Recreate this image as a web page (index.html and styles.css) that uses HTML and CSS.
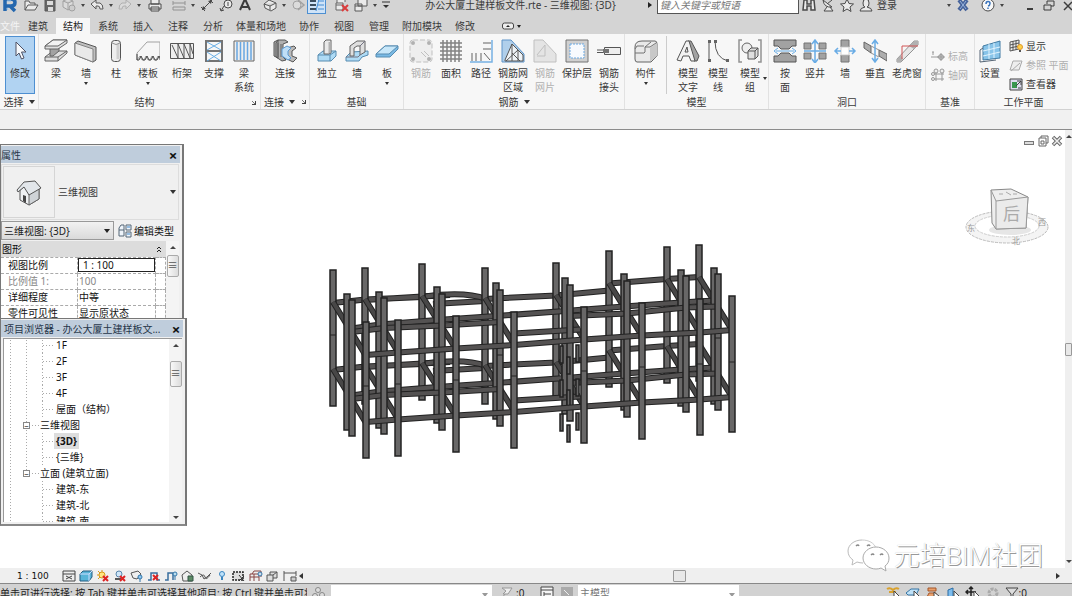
FILE: index.html
```html
<!DOCTYPE html>
<html lang="zh-CN">
<head>
<meta charset="utf-8">
<title>办公大厦土建样板文件.rte - 三维视图: {3D}</title>
<link rel="stylesheet" href="styles.css">
</head>
<body>
<header class="titlebar">
  <div class="titlebar-row">
    <div class="qat">
      <button class="app-logo" aria-label="应用程序菜单"><svg width="16" height="18" viewBox="0 0 16 18"><path d="M3 2v13M3 3h6q4 0 4 3.500t-4 3.500H4M8 10l5 5" fill="none" stroke="#2467ae" stroke-width="3.500"/><path d="M5 5h4M5 12l1 2" stroke="#8fc0ea" fill="none"/></svg></button>
      <button class="q" aria-label="打开"><svg width="16" height="16" viewBox="0 0 16 16"><path d="M2 13V4h4l1 2h5v2M2 13l3-5h10l-3 5z" fill="#eee" stroke="#444"/></svg></button>
      <button class="q" aria-label="保存"><svg width="16" height="16" viewBox="0 0 16 16"><path d="M3 3h10v11H3z" fill="#555" stroke="#444"/><path d="M5 4h6v4H5zM6 10h5v4H6z" fill="#ddd"/></svg></button>
      <button class="q" aria-label="同步"><svg width="16" height="16" viewBox="0 0 16 16"><path d="M2 4l5-2 5 2v6l-5 3-5-3zM2 4l5 2 5-2M7 6v7" fill="#ddd" stroke="#999"/><circle cx="11" cy="11" r="3" fill="#ccc" stroke="#999"/></svg></button>
      <span class="qc"></span>
      <button class="q" aria-label="撤消"><svg width="16" height="16" viewBox="0 0 16 16"><path d="M2 7l5-4v3h4q3 1 3 6h-3q0-3-2-3H7v3z" fill="#eee" stroke="#444"/></svg></button>
      <span class="qc"></span>
      <button class="q" aria-label="重做"><svg width="16" height="16" viewBox="0 0 16 16"><path d="M14 7L9 3v3H5q-3 1-3 6h3q0-3 2-3h2v3z" fill="#ddd" stroke="#aaa"/></svg></button>
      <span class="qc"></span><span class="gap2"></span>
      <button class="q" aria-label="打印"><svg width="16" height="16" viewBox="0 0 16 16"><path d="M4 2h8v5H4zM2 7h12v5H2zM4 10h8v4H4z" fill="#eee" stroke="#333"/></svg></button>
      <span class="gap5"></span>
      <button class="q" aria-label="测量"><svg width="16" height="16" viewBox="0 0 16 16"><path d="M2 6h12M2 4v4M14 4v4M2 10h12v3H2z" fill="none" stroke="#888"/></svg></button>
      <span class="qc"></span>
      <button class="q" aria-label="对齐尺寸标注"><svg width="16" height="16" viewBox="0 0 16 16"><path d="M3 13L13 3M2 10l4 4M10 2l4 4" stroke="#333" fill="none"/><path d="M3 13l1-4 3 3zM13 3L9 4l3 3z" fill="#333"/></svg></button>
      <button class="q" aria-label="按类别标记"><svg width="16" height="16" viewBox="0 0 16 16"><circle cx="10" cy="7" r="4" fill="#eee" stroke="#333"/><path d="M10 5v4M6 9l-3 5M2 11l1 3 3-1" stroke="#333" fill="none"/></svg></button>
      <button class="q" aria-label="文字"><svg width="16" height="16" viewBox="0 0 16 16"><path d="M3 13L7.500 3h1L13 13M5 10h6" stroke="#222" stroke-width="2" fill="none"/></svg></button>
      <span class="gap6"></span>
      <button class="q" aria-label="默认三维视图"><svg width="16" height="16" viewBox="0 0 16 16"><path d="M2 7l5-4 7 3v5l-5 3-6-3zM2 7l6 2 6-3M8 9v4" fill="#eee" stroke="#444"/></svg></button>
      <span class="qc"></span>
      <button class="q" aria-label="剖面"><svg width="16" height="16" viewBox="0 0 16 16"><circle cx="7" cy="8" r="4" fill="#ddd" stroke="#999"/><path d="M8 3l6 5-6 5" fill="none" stroke="#999" stroke-width="1.500"/></svg></button>
      <button class="q q-on" aria-label="细线"><svg width="16" height="16" viewBox="0 0 16 16"><path d="M1 4h6M1 8h6M1 12h6" stroke="#234" stroke-width="2"/><path d="M9 4h6M9 8h6M9 12h6M7 14l3-12" stroke="#2a7fd0" fill="none"/></svg></button>
      <span class="gap6"></span>
      <button class="q" aria-label="关闭隐藏窗口"><svg width="16" height="16" viewBox="0 0 16 16"><path d="M3 6V2h8v3M2 6h7v7H2zM2 8h7" fill="#eee" stroke="#555"/><path d="M8 8l6 6M14 8l-6 6" stroke="#d22" stroke-width="2"/></svg></button>
      <button class="q" aria-label="切换窗口"><svg width="16" height="16" viewBox="0 0 16 16"><path d="M5 2h9v7H5zM2 7h7v7H2zM2 9h7" fill="#eee" stroke="#444"/></svg></button>
      <span class="qc"></span>
      <button class="q-more" aria-label="自定义快速访问工具栏"><svg width="10" height="10" viewBox="0 0 10 10"><path d="M1 2h8" stroke="#333"/><path d="M2 5h6L5 8z" fill="#333"/></svg></button>
    </div>
    <h1 class="doc-title">办公大厦土建样板文件.rte - 三维视图: {3D}</h1>
    <div class="info">
      <span class="tri-right"></span>
      <input class="search" type="text" placeholder="键入关键字或短语" aria-label="搜索">
      <button class="q" aria-label="搜索"><svg width="16" height="16" viewBox="0 0 16 16"><path d="M3 3h3v4h4V3h3l1 10h-4V9H6v4H2z" fill="#eee" stroke="#333" stroke-width="1.500"/></svg></button>
      <button class="q" aria-label="通讯中心"><svg width="16" height="16" viewBox="0 0 16 16"><path d="M3 3q1 8 9 7zM7 7l5-4M7 10l-3 4h9l-3-4" fill="#eee" stroke="#333"/></svg></button>
      <button class="q" aria-label="收藏夹"><svg width="16" height="16" viewBox="0 0 16 16"><path d="M8 2l2 4.500 4.500.5-3.500 3 1 4.500L8 12l-4 2.500L5 10 1.500 7 6 6.500z" fill="#eee" stroke="#333"/></svg></button>
      <button class="q" aria-label="账户"><svg width="16" height="16" viewBox="0 0 16 16"><path d="M5 6q0-4 3-4t3 4-2 4q5 1 5 4H2q0-3 5-4-2 0-2-4z" fill="#eee" stroke="#333"/></svg></button>
      <a class="signin" href="#">登录</a>
      <span class="qc"></span>
      <button class="q gap-after" aria-label="应用程序商店"><svg width="16" height="16" viewBox="0 0 16 16"><path d="M4 3l8 10M12 3L4 13" stroke="#2d4f91" stroke-width="4"/><path d="M5 4l6 8M11 4l-6 8" stroke="#8fb0e0"/></svg></button>
      <button class="q" aria-label="帮助"><svg width="16" height="16" viewBox="0 0 16 16"><circle cx="8" cy="8" r="6" fill="#fff" stroke="#333"/><path d="M6 7q0-2.500 2-2.500T10 6.500 8 9M8 10.500V12" stroke="#2266bb" stroke-width="1.500" fill="none"/></svg></button>
      <span class="qc"></span>
      <span class="win-buttons">
        <button class="q" aria-label="最小化"><svg width="16" height="16" viewBox="0 0 16 16"><path d="M5 12h6" stroke="#222" stroke-width="2"/></svg></button>
        <button class="q" aria-label="还原"><svg width="16" height="16" viewBox="0 0 16 16"><path d="M6 7V4h7v5h-3M3 8h7v5H3z" stroke="#222" fill="none"/></svg></button>
        <button class="q" aria-label="关闭"><svg width="16" height="16" viewBox="0 0 16 16"><path d="M4 5l8 8M12 5l-8 8" stroke="#222" stroke-width="1.500"/></svg></button>
      </span>
    </div>
  </div>
</header>

<nav class="tabs">
  <a class="tab-file" href="#">文件</a>
  <a href="#">建筑</a><a class="active" href="#">结构</a><a href="#">系统</a><a href="#">插入</a><a href="#">注释</a><a href="#">分析</a>
  <a class="long" href="#">体量和场地</a><a href="#">协作</a><a href="#">视图</a><a href="#">管理</a><a class="long" href="#">附加模块</a><a href="#">修改</a>
  <button class="tab-toggle" aria-label="最小化功能区"><svg width="22" height="10" viewBox="0 0 22 10"><rect x="1.500" y="2" width="11" height="6" rx="2" fill="#eee" stroke="#444"/><path d="M5 6h4L7 4zM16 4h4l-2 3z" fill="#222"/></svg></button>
</nav>

<section class="ribbon" aria-label="结构">
  <div class="group g-select">
    <div class="tools">
      <button class="tool modify"><svg width="24" height="24" viewBox="0 0 24 24"><path d="M8 3v14l3-3 2.500 6 2.500-1-2.500-6H18z" fill="#fff" stroke="#445"/></svg><span>修改</span></button>
    </div>
    <div class="group-name">选择<i class="caret"></i></div>
  </div>
  <div class="group g-structure">
    <div class="tools">
      <button class="tool"><svg width="24" height="24" viewBox="0 0 24 24"><path d="M1 18l8-6h14v2l-9 8H1z" fill="#ddd" stroke="#555"/><path d="M1 18h13l9-6M14 18v4" fill="none" stroke="#555"/><path d="M6 17V9l9-4v7l-6 5z" fill="#999" stroke="#555"/><path d="M1 7l8-6h14v3l-9 6H1z" fill="#ddd" stroke="#555"/><path d="M1 7l8-6h14l-9 6z" fill="#f2f2f2" stroke="#555"/></svg><span>梁</span></button>
      <button class="tool"><svg width="24" height="24" viewBox="0 0 24 24"><path d="M1 4l3-2 18 6v13l-3 2L1 16z" fill="#bbb" stroke="#444"/><path d="M1 4l18 6v13L1 16z" fill="#e8e8e8" stroke="#777"/></svg><span>墙<i class="drop"></i></span></button>
      <button class="tool"><svg width="24" height="24" viewBox="0 0 24 24"><rect x="7.500" y="1.500" width="9" height="21" rx="3" fill="#eee" stroke="#444"/><path d="M14 5v15" stroke="#ccc" stroke-width="3"/><path d="M8 4q4 3 8 0" fill="none" stroke="#888"/></svg><span>柱</span></button>
      <button class="tool wide"><svg width="24" height="24" viewBox="0 0 24 24"><path d="M1 14L11 3h13v18l-2-4-2 4h-2l-2-4-2 4h-2l-2-4-2 4H6l-2-4-3 4z" fill="#f6f6f6" stroke="#999"/><path d="M1 15v6h2l2-4 2 4h2l2-4 2 4h2l2-4 2 4h2l2-4 2 4" fill="none" stroke="#333"/></svg><span>楼板<i class="drop"></i></span></button>
      <button class="tool wide"><svg width="26" height="24" viewBox="0 0 26 24"><path d="M1.500 4.500h23v15h-23z" fill="#eee" stroke="#444"/><path d="M3 6l6 13V5l6 14V5l6 14V5l3 10" fill="none" stroke="#444"/></svg><span>桁架</span></button>
      <button class="tool"><svg width="24" height="24" viewBox="0 0 24 24"><path d="M4 2v21M20 2v21M3 2h18M4 12h16M3 22h18" stroke="#666" stroke-width="2"/><path d="M5 3l14 8M19 3L5 11M5 13l14 9M19 13L5 22" stroke="#5aa8e6"/></svg><span>支撑</span></button>
      <button class="tool"><svg width="24" height="24" viewBox="0 0 24 24"><path d="M2 2h20v20H2z" fill="#eee" stroke="#555"/><path d="M5 3v18M8.500 3v18M12 3v18M15.500 3v18M19 3v18" stroke="#5a9fe0" stroke-width="1.500"/></svg><span>梁<br>系统</span></button>
    </div>
    <div class="group-name">结构<i class="launcher"></i></div>
  </div>
  <div class="group g-connect">
    <div class="tools">
      <button class="tool"><svg width="26" height="24" viewBox="0 0 26 24"><path d="M2 3l4-2v18l-4-2zM6 1l7 0 3 2-5 2v13l3 3-4 1-6-4V4z" fill="#aaa" stroke="#444"/><path d="M6 4v14M9 5v13" stroke="#555"/><path d="M15 9l7-2 2 2-4 3v5l5 2-4 4-8-4 2-3z" fill="#b5b5b5" stroke="#444"/><path d="M10 10l5-3 4 2-3 3v4l3 3-3 2-6-4z" fill="#b9dcf7" stroke="#4a90d0"/></svg><span>连接</span></button>
    </div>
    <div class="group-name">连接<i class="caret"></i><i class="launcher near"></i></div>
  </div>
  <div class="group g-found">
    <div class="tools">
      <button class="tool"><svg width="24" height="24" viewBox="0 0 24 24"><path d="M3 16l5-4h13v5l-5 5H3z" fill="#a8d8f5" stroke="#4681aa"/><path d="M3 16h12l6-4M15 16v6" fill="none" stroke="#4681aa"/><path d="M9 3l2-2h5v13l-2 1H9z" fill="#e8e8e8" stroke="#555"/><path d="M14.500 3v11" stroke="#aaa" stroke-width="2"/></svg><span>独立</span></button>
      <button class="tool"><svg width="24" height="24" viewBox="0 0 24 24"><path d="M1 18l5-5 17-1v4l-6 2-3 4H1z" fill="#a8d8f5" stroke="#4681aa"/><path d="M5 17V7l7-5h8v11l-5 3V7h-3l-3 2v8z" fill="#ddd" stroke="#555"/><path d="M15 7l5-5M1 18h12l3-3" fill="none" stroke="#667"/></svg><span>墙</span></button>
      <button class="tool"><svg width="24" height="24" viewBox="0 0 24 24"><path d="M1 15l9-8h13v3l-8 8H1z" fill="#6db4e4" stroke="#4681aa"/><path d="M1 15l9-8h13l-9 8z" fill="#c3e6fa" stroke="#4681aa"/></svg><span>板<i class="drop"></i></span></button>
    </div>
    <div class="group-name">基础</div>
  </div>
  <div class="group g-rebar">
    <div class="tools">
      <button class="tool" disabled><svg width="24" height="24" viewBox="0 0 24 24"><rect x="1" y="1" width="22" height="22" rx="3" fill="#eee" stroke="#bbb" stroke-dasharray="5 2"/><g fill="#aaa"><circle cx="4" cy="4" r="2"/><circle cx="20" cy="4" r="2"/><circle cx="4" cy="20" r="2"/><circle cx="20" cy="20" r="2"/></g><path d="M12 13l5 5M15 12l5 5" stroke="#bbb"/></svg><span>钢筋</span></button>
      <button class="tool"><svg width="24" height="24" viewBox="0 0 24 24"><path d="M4 1v22M8 1v22M12 1v22M16 1v22M20 1v22M1 4h22M1 8h22M1 12h22M1 16h22M1 20h22" stroke="#777" stroke-width="1.500"/></svg><span>面积</span></button>
      <button class="tool"><svg width="24" height="24" viewBox="0 0 24 24"><path d="M23 1v22H1" stroke="#6aaae2" stroke-width="1.500" fill="none"/><path d="M3 14v8M7 14v8M12 14v8M15 14l6 7M14 4h8M14 10h8" stroke="#555"/></svg><span>路径</span></button>
      <button class="tool wide"><svg width="26" height="24" viewBox="0 0 26 24"><path d="M2 1h9l13 14v8H2z" fill="#a9cbea" stroke="#4f8ac4"/><path d="M5 21L12 5l11 11v6H5z" fill="#eef3f8" stroke="#444"/><path d="M12 5v17M18 11v11M6 22l12-11M12 14l8 8" fill="none" stroke="#444"/></svg><span>钢筋网<br>区域</span></button>
      <button class="tool" disabled><svg width="26" height="24" viewBox="0 0 26 24"><path d="M2 1h9l13 14v8H2z" fill="#e2e2e2" stroke="#bbb"/><path d="M5 16l8-10v11H5" fill="none" stroke="#bbb"/></svg><span>钢筋<br>网片</span></button>
      <button class="tool wide"><svg width="24" height="24" viewBox="0 0 24 24"><path d="M1 1h22v22H1z" fill="#ccc" stroke="#666"/><path d="M5 5h14v14H5z" fill="#f8fbff" stroke="#5a9fe0" stroke-dasharray="2 1"/></svg><span>保护层</span></button>
      <button class="tool"><svg width="24" height="24" viewBox="0 0 24 24"><path d="M7.500 8.500h16v7h-16z" fill="#eee" stroke="#444"/><path d="M0 11h12M0 13.500h12" stroke="#444"/><path d="M6 10h6v4H6z" fill="#666"/></svg><span>钢筋<br>接头</span></button>
    </div>
    <div class="group-name">钢筋<i class="caret"></i></div>
  </div>
  <div class="group g-model">
    <div class="tools">
      <button class="tool component"><svg width="24" height="24" viewBox="0 0 24 24"><path d="M1 8q0-6 7-6h13q2 0 2 3v12l-6 6H3q-2 0-2-3z" fill="#e8e8e8" stroke="#555"/><path d="M16 9v13h1l6-5V4z" fill="#c4c4c4"/><path d="M1 14h9l1-1V8l6-5M11 8h5l6-4M1 10l2-3h7" fill="none" stroke="#666"/></svg><span>构件<i class="drop"></i></span></button>
      <button class="tool"><svg width="24" height="24" viewBox="0 0 24 24"><path d="M12 2h3l8 15-2 5h-3z" fill="#999" stroke="#444"/><path d="M1 21L10 2h3l6 20h-4l-2-5H7l-2 5zM9 13h3l-1-5z" fill="#f2f2f2" stroke="#444"/></svg><span>模型<br>文字</span></button>
      <button class="tool"><svg width="24" height="24" viewBox="0 0 24 24"><path d="M3 2v20M9 2q0 17 13 20" fill="none" stroke="#444"/><path d="M2 1h3v3H2zM2 20h3v3H2zM8 1h3v3H8zM20 20h3v3h-3z" fill="#555"/></svg><span>模型<br>线</span></button>
      <button class="tool wide"><svg width="26" height="24" viewBox="0 0 26 24"><path d="M5 1H2v22h3M21 1h3v22h-3" fill="none" stroke="#888" stroke-width="1.500"/><circle cx="10" cy="9" r="5" fill="#eee" stroke="#555"/><path d="M11 12l3-3h7v8l-3 3h-7z" fill="#ddd" stroke="#444"/><path d="M11 12h7v8M18 12l3-3" fill="none" stroke="#444"/></svg><span>模型<br>组</span><i class="drop corner"></i></button>
    </div>
    <div class="group-name">模型</div>
  </div>
  <div class="group g-open">
    <div class="tools">
      <button class="tool"><svg width="24" height="24" viewBox="0 0 24 24"><path d="M1 1h22v6h-4l-3 3H8L5 7H1zM1 23h22v-6h-4l-3-3H8l-3 3H1z" fill="#999" stroke="#444"/><path d="M3 12h18M5 9l-4 3 4 3M19 9l4 3-4 3" fill="none" stroke="#5aa4e4"/></svg><span>按<br>面</span></button>
      <button class="tool"><svg width="24" height="24" viewBox="0 0 24 24"><path d="M1 4h7v6H1zM16 4h7v6h-7zM1 14h7v6H1zM16 14h7v6h-7z" fill="#999" stroke="#666"/><path d="M12 2v21M1 12h22M9 5l3-4 3 4M9 20l3 4 3-4" fill="none" stroke="#5aa4e4" stroke-width="1.500"/></svg><span>竖井</span></button>
      <button class="tool"><svg width="24" height="24" viewBox="0 0 24 24"><path d="M8 1h8v7H8zM8 16h8v7H8z" fill="#999" stroke="#666"/><path d="M8 8h8v8H8z" fill="#fff" stroke="#ccc"/><path d="M3 12h5M16 12h5M5 9l-3 3 3 3M19 9l3 3-3 3" fill="none" stroke="#5aa4e4" stroke-width="1.500"/></svg><span>墙</span></button>
      <button class="tool"><svg width="24" height="24" viewBox="0 0 24 24"><path d="M1 3l7 4v7L1 9zM16 11l8 4v7l-8-5z" fill="#a5a5a5" stroke="#555"/><path d="M8 7l8 4M8 14l8 4" stroke="#888"/><path d="M12 2v20M9 5l3-4 3 4M9 19l3 4 3-4" fill="none" stroke="#5aa4e4" stroke-width="1.500"/></svg><span>垂直</span></button>
      <button class="tool wide"><svg width="24" height="24" viewBox="0 0 24 24"><path d="M2 20L19 2h4v4L6 23H2z" fill="#e5e5e5" stroke="#888"/><path d="M14 7l5-5h4v4l-4 4zM2 20l4-4 2 4-2 3H2z" fill="#aaa"/><path d="M7 20V7h16" fill="none" stroke="#c44"/></svg><span>老虎窗</span></button>
    </div>
    <div class="group-name">洞口</div>
  </div>
  <div class="group g-datum">
    <div class="rows">
      <button class="row-tool" disabled><svg width="14" height="14" viewBox="0 0 14 14"><path d="M0 8h8M2 3v3M1 3h2" stroke="#999"/><circle cx="10" cy="8" r="2.500" fill="#ccc" stroke="#999"/><path d="M10 4v8M6 8h8" stroke="#999"/></svg>标高</button>
      <button class="row-tool" disabled><svg width="14" height="14" viewBox="0 0 14 14"><path d="M5 4v9M11 4v9M3 6h10M3 11h10" stroke="#999"/><g fill="#eee" stroke="#999"><circle cx="5" cy="3" r="2"/><circle cx="11" cy="3" r="2"/><circle cx="2" cy="6" r="1.500"/><circle cx="2" cy="11" r="1.500"/></g></svg>轴网</button>
    </div>
    <div class="group-name">基准</div>
  </div>
  <div class="group g-plane">
    <div class="tools">
      <button class="tool"><svg width="24" height="24" viewBox="0 0 24 24"><path d="M5 7l17-5v17L5 21z" fill="#7dbfe8" stroke="#2f6f9b"/><path d="M11 5v15M16 4v15M5 12l17-4M5 17l17-4" stroke="#e0f4ff"/><path d="M5 9L2 11v12l16-2" fill="none" stroke="#456"/></svg><span>设置</span></button>
      <div class="rows">
        <button class="row-tool"><svg width="14" height="14" viewBox="0 0 14 14"><path d="M1 3l9-2v9l-9 2zM4 2v9M7 2v9M1 6l9-2M1 9l9-2" fill="#eee" stroke="#555"/><circle cx="11" cy="8" r="2.500" fill="#ffd24a" stroke="#e0972a"/><path d="M10 12h2" stroke="#555" stroke-width="2"/></svg>显示</button>
        <button class="row-tool" disabled><svg width="14" height="14" viewBox="0 0 14 14"><path d="M4 3h9l-3 9H1zM2 13l9-8" fill="#eee" stroke="#aaa"/></svg>参照 平面</button>
        <button class="row-tool"><svg width="14" height="14" viewBox="0 0 14 14"><path d="M1 2h12v11H1z" fill="#dde" stroke="#444"/><path d="M3 5h5v6H3z" fill="#38974e"/><path d="M8 4h4v4M7 9l5-5M9 11h3" stroke="#444" fill="none"/></svg>查看器</button>
      </div>
    </div>
    <div class="group-name">工作平面</div>
  </div>
</section>
<div class="options-bar"></div>

<main class="workspace">
  <div class="canvas">
    <svg class="model" viewBox="0 130 1065 438" role="img" aria-label="三维结构模型">
      <defs>
        <rect id="col" x="-3" y="0" width="6" height="136"/>
        <rect id="stub" x="-1" y="0" width="3" height="17"/>
        <path id="row1" d="M333 303L365 299.500 422 297M365 300L422 296.500 450 295M433 304L485 301M485 299L556 295.500 609 290.500M609 283.500L667 279 699 277"/>
        <path id="bow" d="M425 296.500Q465 291 486 299"/>
        <path id="row2" d="M348 329L380 324.500 437 320 496 316 565 311 624 306.500 681 302.500 714 300.500"/>
        <path id="row3" d="M352 332L384 328 442 325.500 500 322M514 333.500L580 329.500M570 316L627 313.500 686 307.500 718 306.500"/>
        <path id="row4" d="M366 355L398 352.500 456 348.500 514 345 584 339.500 642 335.500 700 332.500 732 330"/>
        <path id="cross" d="M333 302L366 356M365 299L398 352M422 296L456 349M485 298L514 344M556 295L584 339M609 283L642 336M667 279L700 333M699 277L732 330"/>
      </defs>
      <use href="#row1" class="edge" y="67"/><use href="#row1" class="face" y="67"/>
      <use href="#bow" class="edge" y="67"/><use href="#bow" class="face" y="67"/>
      <use href="#row1" class="edge"/><use href="#row1" class="face"/>
      <use href="#bow" class="edge"/><use href="#bow" class="face"/>
      <g class="cols">
        <use href="#col" x="333" y="270"/><use href="#col" x="365" y="268"/><use href="#col" x="422" y="264"/><use href="#col" x="485" y="268"/>
        <use href="#col" x="556" y="263"/><use href="#col" x="609" y="251"/><use href="#col" x="667" y="247"/><use href="#col" x="699" y="245"/>
      </g>
      <use href="#cross" class="edge" y="67"/><use href="#cross" class="face dark" y="67"/>
      <use href="#cross" class="edge"/><use href="#cross" class="face dark"/>
      <use href="#row2" class="edge" y="67"/><use href="#row2" class="face" y="67"/>
      <use href="#row2" class="edge"/><use href="#row2" class="face"/>
      <g class="cols">
        <use href="#col" x="347" y="294"/><use href="#col" x="379" y="292"/><use href="#col" x="437" y="287"/><use href="#col" x="496" y="283"/>
        <use href="#col" x="565" y="278"/><use href="#col" x="624" y="274"/><use href="#col" x="681" y="270"/><use href="#col" x="714" y="268"/>
      </g>
      <use href="#row3" class="edge" y="67"/><use href="#row3" class="face" y="67"/>
      <use href="#row3" class="edge"/><use href="#row3" class="face"/>
      <g class="cols">
        <use href="#col" x="352" y="300"/><use href="#col" x="384" y="298"/><use href="#col" x="442" y="294"/><use href="#col" x="500" y="290"/>
        <use href="#col" x="570" y="285"/><use href="#col" x="627" y="281"/><use href="#col" x="686" y="276"/><use href="#col" x="718" y="274"/>
        <use href="#stub" x="561" y="346"/><use href="#stub" x="568" y="357"/><use href="#stub" x="577" y="345"/>
        <use href="#stub" x="561" y="380"/><use href="#stub" x="568" y="390"/><use href="#stub" x="577" y="379"/>
        <use href="#stub" x="561" y="414"/><use href="#stub" x="568" y="425"/><use href="#stub" x="577" y="413"/>
      </g>
      <use href="#row4" class="edge" y="67"/><use href="#row4" class="face" y="67"/>
      <use href="#row4" class="edge"/><use href="#row4" class="face"/>
      <g class="cols">
        <use href="#col" x="366" y="322"/><use href="#col" x="398" y="320"/><use href="#col" x="456" y="316"/><use href="#col" x="514" y="312"/>
        <use href="#col" x="584" y="307"/><use href="#col" x="642" y="303"/><use href="#col" x="700" y="299"/><use href="#col" x="732" y="296"/>
      </g>
      <path class="joint" d="M363 386h6M395 384h6M453 380h6M511 376h6M581 371h6M639 367h6M697 364h6M729 362h6M330 335h6M715 338h6M497 355h6"/>
    </svg>
    <div class="viewcube">
      <svg width="90" height="66" viewBox="963 184 90 66">
        <ellipse cx="1007" cy="227" rx="41" ry="16" fill="#f4f4f4" stroke="#bbb" stroke-dasharray="3 1"/>
        <ellipse cx="1007" cy="226" rx="32" ry="11" fill="#fff" stroke="#ccc" stroke-dasharray="3 1"/>
        <ellipse cx="1010" cy="230" rx="21" ry="5" fill="#e6e6e6"/>
        <path d="M991 190l20-1 17 8-2 31-30 1-4-6z" fill="#eee" stroke="#888"/>
        <path d="M996 201l32-4-2 31-30 1z" fill="#ebebeb" stroke="#999"/>
        <path d="M991 190l5 11" stroke="#999"/>
        <path d="M999 194l4 0M1006 192l5 3M1013 194l4 0" stroke="#aaa"/>
        <g class="compass"><text x="967" y="231">东</text><text x="1012" y="244">北</text><text x="1038" y="225">西</text></g>
        <text class="cube-face" x="1003" y="220">后</text>
      </svg>
    </div>
    <div class="mdi">
      <button aria-label="最小化视图"><svg width="12" height="12" viewBox="0 0 12 12"><rect x="1.500" y="6.500" width="9" height="3" fill="#ddd" stroke="#777"/></svg></button>
      <button aria-label="还原视图"><svg width="12" height="12" viewBox="0 0 12 12"><path d="M4 3V1h7v7H9M2 3h7v8H2zM4 6h3v3H4z" fill="none" stroke="#666"/></svg></button>
      <button aria-label="关闭视图"><svg width="12" height="12" viewBox="0 0 12 12"><path d="M2 2l8 8M10 2l-8 8" stroke="#666" stroke-width="3.500"/><path d="M2.500 2.500l7 7M9.500 2.500l-7 7" stroke="#eee" stroke-width="1.500"/></svg></button>
    </div>
    <div class="watermark">
      <svg width="44" height="36" viewBox="0 0 44 36"><path d="M16 3C8 3 2 8 2 14c0 4 2 7 5 9l-1 5 5-3q3 1 6 1" fill="#fff" stroke="#bbb"/><path d="M16 3c7 0 12 3 14 8" fill="none" stroke="#ccc"/><path d="M30 10c-7 0-13 5-13 11s6 11 13 11q3 0 5-1l5 3-1-5c3-2 4-5 4-8 0-6-6-11-13-11z" fill="#fff" stroke="#aaa"/><path d="M10 9q2-2 3 0M21 9q2-2 3 0M25 18q2-2 3 0M34 18q2-2 3 0" fill="none" stroke="#888" stroke-width="1.500"/></svg>
      <span>元培BIM社团</span>
    </div>
  </div>
  <div class="vscroll"><i class="arrow-up"></i><i class="thumb"></i><i class="arrow-down"></i></div>

  <section class="panel props" aria-label="属性">
    <div class="panel-title"><h2>属性</h2><button aria-label="关闭">×</button></div>
    <div class="type-box">
      <div class="thumb-box"><svg width="28" height="28" viewBox="0 0 28 28"><path d="M5 12v10l9 5 10-6V10L14 5z" fill="#eef0f2" stroke="#555"/><path d="M14 16v11l10-6V10z" fill="#cfd3d7" stroke="#666"/><path d="M2 12l7-8 11-1 6 7-12 7-5-8-6 5z" fill="#e2e6ea" stroke="#555"/><path d="M8 17l3 1v7l-3-2z" fill="#444"/></svg></div>
      <span>三维视图</span><i class="caret"></i>
    </div>
    <div class="instance-row">
      <div class="select-wrap"><select aria-label="实例"><option>三维视图: {3D}</option></select></div>
      <button class="edit-type"><svg width="14" height="14" viewBox="0 0 14 14"><path d="M1 4l2-3h3v11H1zM1 6h5M8 1h5v5H8zM8 8h5v5H8z" fill="#eef4fa" stroke="#567"/><path d="M9 10h3M9 3h3" stroke="#3a84c8"/></svg>编辑类型</button>
    </div>
    <div class="props-body">
      <table>
        <thead><tr><th colspan="3">图形<svg width="8" height="8" viewBox="0 0 8 8"><path d="M2 4l2-2 2 2M2 7l2-2 2 2" fill="none" stroke="#222"/></svg></th></tr></thead>
        <tbody>
          <tr><td><label for="scale">视图比例</label></td><td class="edit"><input id="scale" value="1 : 100"></td><td></td></tr>
          <tr class="dim"><td>比例值 1:</td><td>100</td><td></td></tr>
          <tr><td>详细程度</td><td>中等</td><td></td></tr>
          <tr><td>零件可见性</td><td>显示原状态</td><td></td></tr>
        </tbody>
      </table>
      <div class="pscroll"><i class="arrow-up"></i><i class="grip">≡</i></div>
    </div>
  </section>

  <section class="panel browser" aria-label="项目浏览器">
    <div class="panel-title"><h2>项目浏览器 - 办公大厦土建样板文...</h2><button aria-label="关闭">×</button></div>
    <div class="tree-body">
      <ul class="tree">
        <li class="leaf">1F</li><li class="leaf">2F</li><li class="leaf">3F</li><li class="leaf">4F</li><li class="leaf">屋面（结构）</li>
        <li class="node"><i>−</i>三维视图</li>
        <li class="leaf"><b>{3D}</b></li><li class="leaf">{三维}</li>
        <li class="node"><i>−</i>立面 (建筑立面)</li>
        <li class="leaf">建筑-东</li><li class="leaf">建筑-北</li><li class="leaf">建筑-南</li>
      </ul>
      <div class="pscroll"><i class="arrow-up"></i><i class="grip">≡</i><i class="arrow-down"></i></div>
    </div>
  </section>
</main>

<div class="viewbar">
  <span class="scale">1 : 100</span>
  <div class="view-icons">
    <button aria-label="详细程度"><svg width="14" height="12" viewBox="0 0 14 12"><path d="M1 1h12v10H1zM1 4h12M4 6l6 3M10 6L4 9" fill="#eee" stroke="#444"/></svg></button>
    <button aria-label="视觉样式"><svg width="14" height="12" viewBox="0 0 14 12"><path d="M1 4l3-3h9v6l-3 4H1z" fill="#58b4d8" stroke="#255c80"/><path d="M1 4h9l3-3M10 4v7" stroke="#cdf" fill="none"/></svg></button>
    <button aria-label="日光路径"><svg width="14" height="12" viewBox="0 0 14 12"><circle cx="6" cy="5" r="3" fill="#ffe680" stroke="#d79a1c"/><path d="M6 0v2M1 5h2M2 1l2 2M2 9l2-2" stroke="#d79a1c"/><path d="M7 6l5 5M12 6l-5 5" stroke="#d22" stroke-width="2"/></svg></button>
    <button aria-label="阴影"><svg width="14" height="12" viewBox="0 0 14 12"><circle cx="6" cy="4" r="3" fill="#cfe6f8" stroke="#5684aa"/><path d="M2 9h6" stroke="#555" stroke-width="2"/><path d="M7 6l5 5M12 6l-5 5" stroke="#d22" stroke-width="2"/></svg></button>
    <button aria-label="渲染"><svg width="14" height="12" viewBox="0 0 14 12"><path d="M1 3l7-2 3 3-4 5-4-1z" fill="#eee" stroke="#555"/><circle cx="10" cy="7" r="2" fill="#8cc4ee" stroke="#37a"/><path d="M10 9v3" stroke="#37a"/></svg></button>
    <button aria-label="裁剪视图"><svg width="14" height="12" viewBox="0 0 14 12"><path d="M1 10h3V3h6v7h3" fill="none" stroke="#3a6f9f" stroke-width="1.500"/><path d="M6 5l5 5M11 5l-5 5" stroke="#d22" stroke-width="2"/></svg></button>
    <button aria-label="显示裁剪区域"><svg width="14" height="12" viewBox="0 0 14 12"><path d="M1 10h3V3h5v7" fill="none" stroke="#3a6f9f" stroke-width="1.500"/><circle cx="11" cy="4" r="2" fill="#bde" stroke="#37a"/><path d="M11 6v4" stroke="#37a"/></svg></button>
    <button aria-label="锁定三维视图"><svg width="14" height="12" viewBox="0 0 14 12"><path d="M1 5l5-4 5 4v6H2z" fill="#eee" stroke="#555"/><path d="M7 6h5v5H7z" fill="#5b8a64" stroke="#354"/></svg></button>
    <button aria-label="临时隐藏"><svg width="14" height="12" viewBox="0 0 14 12"><path d="M0 3l4 2 2 4 3-2 4-4M2 7q4-4 5 0t5-2" fill="none" stroke="#555"/></svg></button>
    <button aria-label="显示隐藏的图元"><svg width="14" height="12" viewBox="0 0 14 12"><circle cx="7" cy="4" r="2.500" fill="#bfe2fa" stroke="#3a86c0"/><path d="M7 7v3" stroke="#3a86c0" stroke-width="2"/></svg></button>
    <button aria-label="临时视图属性"><svg width="14" height="12" viewBox="0 0 14 12"><path d="M1 2h10v8H1z" fill="#ddd" stroke="#222" stroke-width="1.500" stroke-dasharray="2 1"/><path d="M7 5l5 6M12 6l-5 5" stroke="#333"/></svg></button>
    <button aria-label="分析模型"><svg width="14" height="12" viewBox="0 0 14 12"><path d="M1 11V4h9v7M1 7h9M3 4l2-3h7v6M5 4v7" fill="none" stroke="#844"/><circle cx="11" cy="4" r="2" fill="#cde" stroke="#37a"/></svg></button>
    <button aria-label="位移集"><svg width="14" height="12" viewBox="0 0 14 12"><path d="M1 5h6v6H1zM4 5V2h7v6H7M7 5l4-3" fill="#ddd" stroke="#555"/></svg></button>
    <button aria-label="显示约束"><svg width="14" height="12" viewBox="0 0 14 12"><path d="M1 1v10M13 1v5M1 3h12M8 7h5v4H8z" fill="#ccc" stroke="#555"/></svg></button>
  </div>
  <i class="arrow-left"></i>
  <div class="hscroll"><i class="thumb"></i></div>
  <i class="arrow-right"></i>
</div>

<footer class="status">
  <div class="status-row">
    <span class="hint">单击可进行选择; 按 Tab 键并单击可选择其他项目; 按 Ctrl 键并单击可将新项目添加到选择集</span>
    <svg class="workset" width="16" height="14" viewBox="0 0 16 14"><g fill="#ddd" stroke="#888"><circle cx="7" cy="4" r="2.500"/><circle cx="4" cy="10" r="2.500"/><circle cx="11" cy="9" r="2.500"/></g></svg>
    <div class="select-wrap light active-set"><select aria-label="活动工作集"><option></option></select></div>
    <svg width="14" height="14" viewBox="0 0 14 14"><path d="M2 2h10L8 8H3l3-3zM2 12l3-4" fill="#eee" stroke="#999"/></svg>
    <span class="count">:0</span>
    <svg class="opt" width="14" height="14" viewBox="0 0 14 14"><path d="M1 1h12v12H1zM1 4h12M4 6v6M4 8h7M4 11h7" fill="#f5f5f5" stroke="#444"/></svg>
    <svg width="14" height="14" viewBox="0 0 14 14"><path d="M1 1h12v12H1z" fill="#aaa"/><path d="M4 4l5 5M4 11h6" stroke="#eee"/></svg>
    <div class="select-wrap light design"><select aria-label="设计选项"><option>主模型</option></select></div>
    <div class="sel-icons">
      <svg width="16" height="14" viewBox="0 0 16 14"><path d="M2 3q3-2 6 1 3-3 6-1M4 6h7" stroke="#d9a12c" stroke-width="2" fill="none"/><path d="M9 5v8l5-3z" fill="#fff" stroke="#444"/></svg>
      <svg width="16" height="14" viewBox="0 0 16 14"><path d="M1 7l5-4h8l-3 6H3z" fill="#bfe1f7" stroke="#3675a4"/><path d="M9 5v8l5-3z" fill="#fff" stroke="#444"/></svg>
      <svg width="16" height="14" viewBox="0 0 16 14"><path d="M3 2h8v3H3zM4 7h7v4H2z" fill="#e9a06b" stroke="#a4562a"/><path d="M9 6v7l5-3z" fill="#fff" stroke="#444"/></svg>
      <svg width="16" height="14" viewBox="0 0 16 14"><path d="M3 4l5-2v9l-5 2z" fill="#7dbdee" stroke="#2a6ca4"/><path d="M9 5v8l5-3z" fill="#fff" stroke="#444"/></svg>
      <svg width="16" height="14" viewBox="0 0 16 14"><path d="M6 1v10M1 6h10M4 3l2-2 2 2M3 4L1 6l2 2" stroke="#222" stroke-width="1.500" fill="none"/><path d="M9 5v8l5-3z" fill="#fff" stroke="#444"/></svg>
      <svg width="16" height="14" viewBox="0 0 16 14"><circle cx="8" cy="7" r="4" fill="none" stroke="#aaa" stroke-width="3" stroke-dasharray="3 1"/></svg>
      <svg width="14" height="14" viewBox="0 0 14 14"><path d="M1 2h12L8 8v5l-2-2V8z" fill="#ddd" stroke="#444"/></svg>
      <span>:0</span>
    </div>
  </div>
</footer>
</body>
</html>
```

FILE: styles.css
```css
* { box-sizing: border-box; }
html, body { height: 100%; margin: 0; }
body {
  display: flex;
  flex-direction: column;
  overflow: hidden;
  background: #d4d4d4;
  color: #3a3a3a;
  font: 10px/14px "Noto Sans", "Noto Sans CJK SC", sans-serif;
}
button, input, select { font: inherit; color: inherit; margin: 0; }
button { padding: 0; border: 0; background: none; white-space: nowrap; }
a { color: inherit; text-decoration: none; }
h1, h2 { margin: 0; font: inherit; }
svg { display: block; flex: none; }
i { font-style: normal; }

/* Title bar */
.titlebar { height: 18px; overflow: hidden; flex: none; }
.titlebar-row { display: flex; align-items: center; height: 18px; margin-top: -4px; }
.qat, .info { display: flex; align-items: center; flex: none; }
.app-logo { width: 21px; padding-left: 2px; }
.q { width: 19px; height: 18px; display: flex; align-items: center; justify-content: center; flex: none; }
.q svg { opacity: 0.85; }
.q-on { background: #cfe3f7; border: 1px solid #4d8fd1; }
.q-more { width: 14px; padding-left: 2px; }
.qc { width: 9px; display: flex; justify-content: center; flex: none; }
.qc::after { content: ""; border: 2px solid transparent; border-top: 3px solid #444; border-bottom: 0; }
.gap2 { width: 2px; }
.gap5 { width: 5px; }
.gap6 { width: 6px; }
.doc-title { flex: 1; min-width: 0; text-align: center; white-space: nowrap; }
.info { width: 424px; }
.tri-right { width: 9px; }
.tri-right::after { content: ""; display: block; width: 0; border: 3px solid transparent; border-left: 4px solid #222; border-right: 0; }
.search { width: 142px; height: 18px; padding: 0 2px; border: 1px solid #555; background: #fff; font-style: italic; }
.search::placeholder { color: #777; opacity: 1; }
.signin { flex: 1; padding-left: 2px; }
.gap-after { margin-right: 6px; }
.win-buttons { display: flex; margin-left: 14px; margin-right: -5px; }

/* Tabs */
.tabs { display: flex; gap: 1px; height: 16px; flex: none; }
.tabs a { padding: 0 7px; line-height: 17px; white-space: nowrap; }
.tabs .tab-file { padding: 0; color: #f4f4f4; }
.tabs .long { padding: 0 5px; }
.tabs .active { background: #f7f7f7; color: #222; }
.tab-toggle { margin-left: 18px; }

/* Ribbon */
.ribbon { display: flex; height: 76px; flex: none; background: #f7f7f7; border-bottom: 1px solid #d2d2d2; }
.group { display: flex; flex-direction: column; flex: none; border-right: 1px solid #e2e2e2; }
.group-name { position: relative; display: flex; align-items: center; justify-content: center; height: 15px; white-space: nowrap; }
.tools { display: flex; height: 60px; padding: 2px 0 0 2px; }
.tool { position: relative; width: 30px; height: 58px; display: flex; flex-direction: column; align-items: center; gap: 3px; padding-top: 3px; flex: none; line-height: 14px; }
.tool svg { opacity: 0.9; }
.tool.wide { width: 34px; }
.tool:disabled, .row-tool:disabled { color: #b0b0b0; }
.modify { background: #b1d3f2; box-shadow: inset 0 0 0 1px #4d8fd1; }
.caret { margin-left: 5px; border: 3px solid transparent; border-top: 4px solid #333; border-bottom: 0; }
.drop { display: block; width: 4px; margin: 2px auto 0; border: 2px solid transparent; border-top: 3px solid #333; border-bottom: 0; }
.drop.corner { position: absolute; right: 0; bottom: 14px; }
.launcher { position: absolute; right: 4px; bottom: 4px; width: 4px; height: 4px; border-right: 1px solid #444; border-bottom: 1px solid #444; background: linear-gradient(45deg, transparent 40%, #777 40%, #777 60%, transparent 60%); }
.launcher.near { position: static; margin-left: 7px; }
.g-select { width: 39px; }
.g-select .tools { padding-left: 5px; }
.g-structure { width: 222px; }
.g-structure .group-name { padding-right: 10px; }
.g-connect { width: 49px; }
.g-connect .tools { padding-left: 9px; }
.g-found { width: 94px; }
.g-rebar { width: 221px; }
.g-model { width: 144px; }
.g-model .tools { padding-left: 0; }
.tool.component { width: 42px; margin-right: 6px; border-right: 1px solid #ccc; }
.g-open { width: 157px; }
.g-open .tools { padding-left: 1px; }
.g-datum { width: 49px; }
.g-plane { flex: 1; border-right: 0; }
.g-plane .tools { padding-left: 0; gap: 4px; }
.rows { display: flex; flex-direction: column; }
.g-datum .rows { height: 60px; padding: 12px 0 0 5px; }
.row-tool { display: flex; align-items: center; gap: 3px; height: 19px; }

.options-bar { height: 20px; flex: none; background: #f1f1f1; border-bottom: 1px solid #8c8c8c; }

/* Drawing area */
.workspace { position: relative; display: flex; flex: 1; min-height: 0; background: #fff; }
.canvas { position: relative; flex: 1; min-width: 0; }
.model { width: 100%; height: 100%; }
.edge { fill: none; stroke: #222; stroke-width: 6; }
.face { fill: none; stroke: #545252; stroke-width: 4; }
.dark { stroke: #484747; }
.cols { fill: #686767; stroke: #222; stroke-width: 1.5; }
.joint { fill: none; stroke: #222; }
.viewcube { position: absolute; right: 12px; top: 54px; }
.compass { font-size: 8px; fill: #999; }
.cube-face { font-size: 17px; fill: #aaa; }
.mdi { position: absolute; right: 2px; top: 5px; display: flex; gap: 2px; }
.watermark { position: absolute; right: 22px; bottom: -5px; z-index: 2; display: flex; align-items: center; gap: 4px; color: #fff; font-size: 26px; font-weight: 300; line-height: 34px; text-shadow: 1px 1px 0 #999, 0 0 1px #bbb; white-space: nowrap; font-family: "Open Sans", "Noto Sans CJK SC", sans-serif; }
.vscroll { display: flex; flex-direction: column; align-items: center; justify-content: space-between; width: 7px; padding: 5px 0; background: #efefef; }
.thumb { background: #e8e8e8; border: 1px solid #999; border-radius: 1px; }
.vscroll .thumb { width: 7px; height: 13px; }
.arrow-up { border: 3px solid transparent; border-bottom: 3px solid #444; border-top: 0; }
.arrow-down { border: 3px solid transparent; border-top: 3px solid #444; border-bottom: 0; }
.arrow-left { border: 3px solid transparent; border-right: 4px solid #333; border-left: 0; }
.arrow-right { border: 3px solid transparent; border-left: 4px solid #333; border-right: 0; }

/* Drop-down boxes with their own arrow */
.select-wrap { position: relative; flex: none; }
.select-wrap select { appearance: none; display: block; width: 100%; padding: 0 2px; border-radius: 0; }
.select-wrap::after { content: ""; position: absolute; right: 4px; top: 8px; border: 3px solid transparent; border-top: 4px solid #222; border-bottom: 0; pointer-events: none; }
.select-wrap.light::after { border-top-color: #999; }

/* Floating panels */
.panel { position: absolute; left: 0; display: flex; flex-direction: column; background: #f0f0f0; border: solid #777; border-width: 1px 2px 0 1px; }
.panel-title { display: flex; align-items: center; justify-content: space-between; height: 17px; margin: 1px 2px 1px 0; background: #bfcddc; color: #27364a; flex: none; white-space: nowrap; }
.panel-title button { width: 14px; font-size: 15px; font-weight: bold; color: #111; }
.props { top: 14px; width: 184px; height: 176px; }
.type-box { display: flex; align-items: center; height: 56px; margin-right: 3px; padding-right: 2px; border: 1px solid #ddd; flex: none; }
.type-box span { flex: 1; padding-left: 3px; }
.thumb-box { display: flex; align-items: center; justify-content: center; width: 52px; height: 52px; margin-left: 1px; border: 1px solid #d5d5d5; }
.instance-row { display: flex; align-items: center; gap: 4px; height: 21px; flex: none; }
.instance-row .select-wrap { width: 113px; }
.instance-row select { height: 19px; border: 1px solid #999; color: #222; background: linear-gradient(#f2f2f2, #dadada); }
.edit-type { display: flex; align-items: center; gap: 2px; color: #111; }
.props-body { display: flex; flex: 1; min-height: 0; overflow: hidden; margin-right: 3px; }
.props-body table { flex: 1; align-self: flex-start; border-collapse: collapse; table-layout: fixed; background: #fff; color: #111; }
th { height: 16px; padding: 0 3px 0 1px; background: #dcdcdc; font-weight: normal; text-align: left; line-height: 14px; }
th svg { float: right; margin-top: 3px; }
td { height: 16px; padding: 0 0 0 7px; border: 1px dashed #aaa; border-left: 0; line-height: 14px; white-space: nowrap; }
td + td { width: 77px; padding-left: 1px; }
td + td + td { width: 10px; }
td.edit { padding: 0; }
td input { display: block; width: 77px; height: 14px; padding: 0 4px; border: 1px solid #222; background: #fff; }
.dim { color: #888; }
.pscroll { display: flex; flex-direction: column; align-items: center; width: 13px; padding-top: 5px; background: #f4f4f4; flex: none; }
.pscroll .grip { width: 12px; height: 22px; margin-top: 6px; border: 1px solid #aaa; border-radius: 2px; background: linear-gradient(90deg, #f8f8f8, #dcdcdc); text-align: center; line-height: 19px; color: #555; }
.browser { top: 188px; width: 187px; height: 208px; border-bottom: 2px solid #888; }
.browser .panel-title { padding-left: 3px; }
.tree-body { display: flex; flex: 1; min-height: 0; margin: 0 3px 2px 2px; overflow: hidden; background: #fff; border: 1px solid #999; border-width: 1px 0 0 1px; }
.tree {
  flex: 1; margin: -2px 0 0; padding: 0; list-style: none; color: #111;
  background: repeating-linear-gradient(#aaa 0 1px, transparent 1px 3px) 6px 0 / 1px 100% no-repeat, repeating-linear-gradient(#aaa 0 1px, transparent 1px 3px) 22px 0 / 1px 140px no-repeat;
}
.tree li { height: 16px; line-height: 16px; white-space: nowrap; }
.leaf { padding-left: 52px; background: repeating-linear-gradient(#aaa 0 1px, transparent 1px 3px) 38px 0 / 1px 100% no-repeat, repeating-linear-gradient(90deg, #aaa 0 1px, transparent 1px 3px) 39px 8px / 11px 1px no-repeat; }
.leaf b { display: inline-block; margin-left: -2px; padding: 0 2px; background: #ddd; }
.node { display: flex; align-items: center; padding-left: 19px; background: repeating-linear-gradient(90deg, #aaa 0 1px, transparent 1px 3px) 28px 8px / 7px 1px no-repeat; }
.node i { width: 7px; height: 7px; margin-right: 10px; border: 1px solid #888; background: #fff; font-size: 8px; line-height: 5px; text-align: center; }
.browser .pscroll .grip { height: 26px; margin-top: 14px; line-height: 23px; }
.browser .arrow-down { margin-top: auto; margin-bottom: 3px; }

/* View control bar */
.viewbar { display: flex; align-items: center; height: 16px; padding-left: 17px; background: #efefef; border-bottom: 1px solid #888; flex: none; }
.scale { width: 45px; color: #111; font-family: "DejaVu Sans", sans-serif; font-size: 9px; }
.view-icons { display: flex; gap: 3px; }
.view-icons button { width: 14px; height: 12px; }
.viewbar .arrow-left { margin-left: 2px; }
.hscroll { flex: 1; display: flex; justify-content: center; }
.hscroll .thumb { width: 13px; height: 12px; }
.viewbar .arrow-right { margin-right: 12px; }

/* Status bar */
.status { height: 12px; overflow: hidden; background: #d2d2d2; color: #222; flex: none; }
.status-row { display: flex; align-items: center; height: 18px; }
.hint { width: 307px; overflow: hidden; white-space: nowrap; flex: none; }
.workset { margin-left: 4px; }
.status .select-wrap { width: 161px; }
.status select { height: 16px; border: 0; background: #fff; color: #777; }
.status .active-set { margin: 0 8px 0 4px; }
.count { width: 24px; padding-left: 2px; }
.opt { margin: 0 6px 0 2px; }
.status .design { margin-left: 4px; }
.sel-icons { display: flex; align-items: center; gap: 4px; margin-left: auto; padding-right: 45px; }
.sel-icons span { margin-left: -4px; }
```
